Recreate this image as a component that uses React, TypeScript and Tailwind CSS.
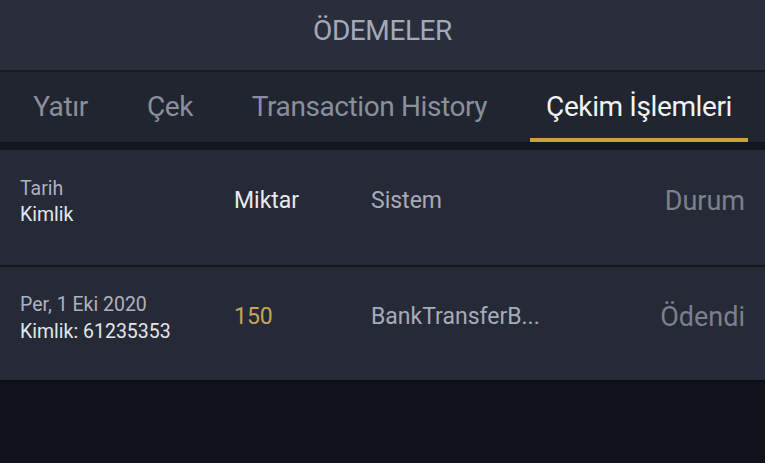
import React, { useState } from 'react';

const tabs = [
  { label: 'Yatır', width: 'w-[121px]' },
  { label: 'Çek', width: 'w-[98px]' },
  { label: 'Transaction History', width: 'w-[301px]' },
  { label: 'Çekim İşlemleri', width: 'w-[218px] ml-[10px]' },
];

const Payments: React.FC = () => {
  const [active, setActive] = useState(3);

  return (
    <div className="w-[765px] h-[463px] bg-[#10131b] font-['Roboto',sans-serif] overflow-hidden">
      {/* başlık */}
      <div className="h-[70px] bg-[#2a2e3b] flex items-center justify-center pb-[8px]">
        <h1 className="text-[28px] text-[#a4a9ba] tracking-[-0.4px]">ÖDEMELER</h1>
      </div>
      <div className="h-[2px] bg-[#171a22]" />

      {/* sekmeler */}
      <div className="h-[70px] bg-[#212530] flex items-stretch">
        {tabs.map((tab, i) => (
          <button
            key={tab.label}
            onClick={() => setActive(i)}
            className={`relative flex items-center justify-center text-[28px] tracking-[-0.4px] whitespace-nowrap ${tab.width} ${
              active === i ? 'text-[#f2f2f2]' : 'text-[#8a8f9d]'
            }`}
          >
            <span>{tab.label}</span>
            {active === i && (
              <span className="absolute left-0 right-0 bottom-0 h-[4px] bg-[#c9a33b]" />
            )}
          </button>
        ))}
      </div>
      <div className="h-[8px] bg-[#13161e]" />

      {/* tablo başlığı */}
      <div className="h-[115px] bg-[#262a37] flex items-center pl-[20px] pr-[20px] pb-[12px]">
        <div className="w-[214px] text-[19.5px] leading-[26px] text-[#aeb2bf]">
          <div>Tarih</div>
          <div className="text-[#e4e6ea]">Kimlik</div>
        </div>
        <div className="w-[137px] text-[23px] text-[#e8e9ec]">Miktar</div>
        <div className="flex-1 text-[23px] text-[#a6abb9]">Sistem</div>
        <div className="text-[27px] text-[#7b808e]">Durum</div>
      </div>
      <div className="h-[2px] bg-[#14171e]" />

      {/* satır */}
      <div className="h-[113px] bg-[#262a37] flex items-center pl-[20px] pr-[20px] pb-[12px] shadow-[0_2px_3px_rgba(0,0,0,0.4)]">
        <div className="w-[214px] text-[19.5px] leading-[27px]">
          <div className="text-[#aeb2bf]">Per, 1 Eki 2020</div>
          <div className="text-[#e4e6ea]">Kimlik: 61235353</div>
        </div>
        <div className="w-[137px] text-[23px] text-[#c9a356]">150</div>
        <div className="flex-1 text-[23px] text-[#a6abb9]">BankTransferB...</div>
        <div className="text-[27px] text-[#7b808e]">Ödendi</div>
      </div>
    </div>
  );
};

export default function App() {
  return <Payments />;
}
